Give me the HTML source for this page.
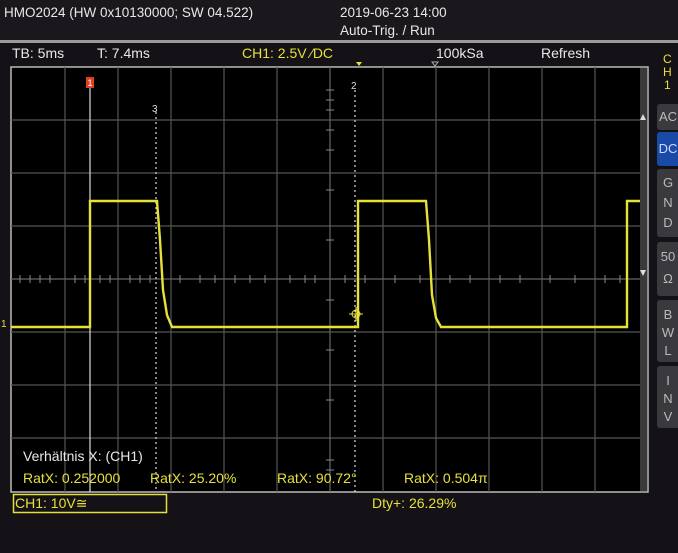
<!DOCTYPE html><html><head><meta charset="utf-8"><style>
body{margin:0;width:678px;height:553px;background:#141216;overflow:hidden;font-family:"Liberation Sans",sans-serif;position:relative}
.t{position:absolute;white-space:nowrap;font-size:14px}
.w{color:#e8e8e8}.y{color:#e6e03a}
.b{position:absolute;left:657px;width:22px;background:#3a3a3e;border-radius:3px 0 0 3px;color:#bbb;font-size:13px;text-align:center;line-height:16px}
</style></head><body>
<div style="position:absolute;left:0;top:0;width:678px;height:40px;background:#1a181c"></div>
<div style="position:absolute;left:0;top:40px;width:678px;height:3px;background:#9a9a9a"></div>
<div class="t w" style="left:4px;top:5px;font-size:13.5px">HMO2024 (HW 0x10130000; SW 04.522)</div>
<div class="t w" style="left:340px;top:5px;font-size:13.5px">2019-06-23 14:00</div>
<div class="t w" style="left:340px;top:23px;font-size:13.5px">Auto-Trig. / Run</div>
<div class="t w" style="left:12px;top:45px">TB: 5ms</div>
<div class="t w" style="left:97px;top:45px">T: 7.4ms</div>
<div class="t y" style="left:242px;top:45px">CH1: 2.5V ⁄DC</div>
<div class="t w" style="left:436px;top:45px">100kSa</div>
<div class="t w" style="left:541px;top:45px">Refresh</div>
<div class="t y" style="left:663px;top:53px;font-size:12px;line-height:13px;text-align:center">C<br>H<br>1</div>
<svg style="position:absolute;left:0;top:0" width="678" height="553">
<rect x="11" y="67" width="637" height="425" fill="#000" stroke="#bbb" stroke-width="1.5"/>
<rect x="640" y="68" width="7" height="423" fill="#3a3a3a"/>
<g stroke="#555" stroke-width="1.2">
<path d="M65 67V492M118 67V492M171 67V492M224 67V492M277 67V492M383 67V492M436 67V492M489 67V492M542 67V492M595 67V492"/>
<path d="M11 120H640M11 173H640M11 226H640M11 332H640M11 385H640M11 438H640"/>
<path d="M330 67V492M11 279H640" stroke="#666"/>
</g>
<g stroke="#888" stroke-width="1">
<path d="M20 275v8M30 275v8M40 275v8M50 275v8M75 275v8M85 275v8M100 275v8M110 275v8M130 275v8M140 275v8M150 275v8M180 275v8M200 275v8M215 275v8M235 275v8M250 275v8M265 275v8M290 275v8M305 275v8M315 275v8M345 275v8M365 275v8M395 275v8M420 275v8M450 275v8M470 275v8M500 275v8M520 275v8M550 275v8M575 275v8M605 275v8M620 275v8"/>
<path d="M326 90h8M326 100h8M326 110h8M326 130h8M326 150h8M326 190h8M326 240h8M326 300h8M326 350h8M326 400h8M326 460h8M326 470h8"/>
</g>
<path d="M90 88V492" stroke="#ddd" stroke-width="1.2"/>
<rect x="86" y="77" width="8" height="11" fill="#e04020"/><text x="87.5" y="86" font-size="9" fill="#fff" font-family="Liberation Sans">1</text>
<path d="M156 112V492M355 90V492" stroke="#ddd" stroke-width="1.2" stroke-dasharray="2,3"/>
<text x="152" y="112" font-size="10" fill="#ddd" font-family="Liberation Sans">3</text>
<text x="351" y="89" font-size="10" fill="#ddd" font-family="Liberation Sans">2</text>
<path d="M356 62l3 4 3-4z" fill="#e6e03a"/><path d="M432 62l3 4 3-4z" fill="none" stroke="#aaa"/>
<path d="M640 120l3-6 3 6zM640 270l3 6 3-6z" fill="#ddd"/>
<path d="M11 327H90V201H157L160 240L163 290L167 315L172 327H358V201H426L429 240L432 295L436 318L441 327H627V201H640" fill="none" stroke="#e6e03a" stroke-width="2.4"/>
<circle cx="356" cy="314" r="4" fill="none" stroke="#e6e03a"/><path d="M349 314h14M356 307v14" stroke="#e6e03a"/>
<text x="1" y="327" font-size="10" fill="#e6e03a" font-family="Liberation Sans">1</text>
<rect x="13.5" y="494.5" width="153" height="18" fill="none" stroke="#e6e03a" stroke-width="1.5"/>
</svg>
<div class="t w" style="left:23px;top:448px">Verhältnis X: (CH1)</div>
<div class="t y" style="left:23px;top:470px">RatX: 0.252000</div>
<div class="t y" style="left:150px;top:470px">RatX: 25.20%</div>
<div class="t y" style="left:277px;top:470px">RatX: 90.72°</div>
<div class="t y" style="left:404px;top:470px">RatX: 0.504π</div>
<div class="t y" style="left:15px;top:495px">CH1: 10V≅</div>
<div class="t y" style="left:372px;top:495px">Dty+: 26.29%</div>
<div class="b" style="top:104px;height:26px;line-height:26px">AC</div>
<div class="b" style="top:132px;height:34px;line-height:34px;background:#1a4aa8;color:#cfd8ff">DC</div>
<div class="b" style="top:169px;height:68px;padding-top:4px;box-sizing:border-box;line-height:20px">G<br>N<br>D</div>
<div class="b" style="top:242px;height:54px;padding-top:4px;box-sizing:border-box;line-height:22px">50<br>Ω</div>
<div class="b" style="top:300px;height:62px;padding-top:6px;box-sizing:border-box;line-height:18px">B<br>W<br>L</div>
<div class="b" style="top:366px;height:62px;padding-top:6px;box-sizing:border-box;line-height:18px">I<br>N<br>V</div>
</body></html>
